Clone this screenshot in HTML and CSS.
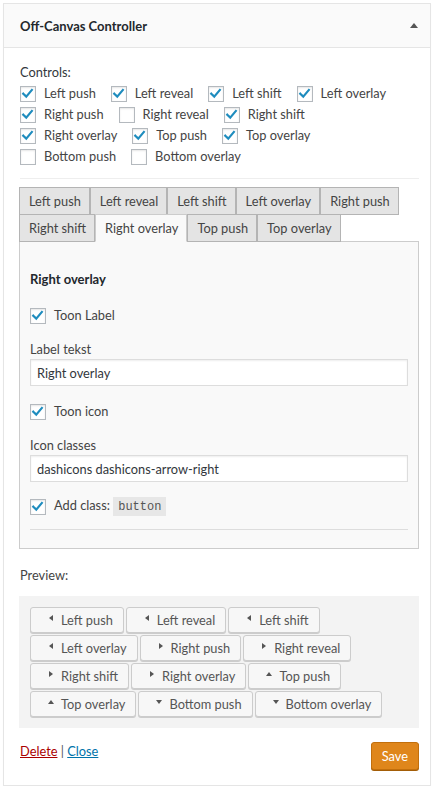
FILE: index.html
```html
<!DOCTYPE html>
<html lang="nl">
<head>
<meta charset="utf-8">
<title>Off-Canvas Controller</title>
<link rel="stylesheet" href="styles.css">
</head>
<body>
<div class="widget">
  <div class="widget-top">
    <h3 class="widget-title">Off-Canvas Controller</h3>
    <span class="toggle-arrow"></span>
  </div>
  <div class="widget-inside">
    <p class="controls-label">Controls:</p>
    <div class="controls-list">
      <label class="cb-item"><span class="cb"><svg viewBox="0 0 16 16" class="chk"><path d="M2.6 7.6 L6 11 L12.4 3.4"/></svg></span>Left push</label>
      <label class="cb-item"><span class="cb"><svg viewBox="0 0 16 16" class="chk"><path d="M2.6 7.6 L6 11 L12.4 3.4"/></svg></span>Left reveal</label>
      <label class="cb-item"><span class="cb"><svg viewBox="0 0 16 16" class="chk"><path d="M2.6 7.6 L6 11 L12.4 3.4"/></svg></span>Left shift</label>
      <label class="cb-item"><span class="cb"><svg viewBox="0 0 16 16" class="chk"><path d="M2.6 7.6 L6 11 L12.4 3.4"/></svg></span>Left overlay</label>
      <label class="cb-item"><span class="cb"><svg viewBox="0 0 16 16" class="chk"><path d="M2.6 7.6 L6 11 L12.4 3.4"/></svg></span>Right push</label>
      <label class="cb-item"><span class="cb"></span>Right reveal</label>
      <label class="cb-item"><span class="cb"><svg viewBox="0 0 16 16" class="chk"><path d="M2.6 7.6 L6 11 L12.4 3.4"/></svg></span>Right shift</label>
      <label class="cb-item"><span class="cb"><svg viewBox="0 0 16 16" class="chk"><path d="M2.6 7.6 L6 11 L12.4 3.4"/></svg></span>Right overlay</label>
      <label class="cb-item"><span class="cb"><svg viewBox="0 0 16 16" class="chk"><path d="M2.6 7.6 L6 11 L12.4 3.4"/></svg></span>Top push</label>
      <label class="cb-item"><span class="cb"><svg viewBox="0 0 16 16" class="chk"><path d="M2.6 7.6 L6 11 L12.4 3.4"/></svg></span>Top overlay</label>
      <label class="cb-item"><span class="cb"></span>Bottom push</label>
      <label class="cb-item"><span class="cb"></span>Bottom overlay</label>
    </div>
    <hr class="sep">
    <div class="tabs">
      <span class="tab">Left push</span>
      <span class="tab">Left reveal</span>
      <span class="tab">Left shift</span>
      <span class="tab">Left overlay</span>
      <span class="tab">Right push</span>
      <span class="tab">Right shift</span>
      <span class="tab active">Right overlay</span>
      <span class="tab">Top push</span>
      <span class="tab">Top overlay</span>
    </div>
    <div class="panel">
      <h4 class="panel-title">Right overlay</h4>
      <label class="cb-item field-cb"><span class="cb"><svg viewBox="0 0 16 16" class="chk"><path d="M2.6 7.6 L6 11 L12.4 3.4"/></svg></span>Toon Label</label>
      <label class="field-label">Label tekst</label>
      <input class="text-input" type="text" value="Right overlay">
      <label class="cb-item field-cb"><span class="cb"><svg viewBox="0 0 16 16" class="chk"><path d="M2.6 7.6 L6 11 L12.4 3.4"/></svg></span>Toon icon</label>
      <label class="field-label">Icon classes</label>
      <input class="text-input" type="text" value="dashicons dashicons-arrow-right">
      <label class="cb-item field-cb add-class"><span class="cb"><svg viewBox="0 0 16 16" class="chk"><path d="M2.6 7.6 L6 11 L12.4 3.4"/></svg></span><span>Add class: <code>button</code></span></label>
      <hr class="panel-sep">
    </div>
    <p class="preview-label">Preview:</p>
    <div class="preview">
      <div class="btn-wrap">
        <span class="pbtn"><span class="ico"><i class="tri tri-left"></i></span>Left push</span>
        <span class="pbtn"><span class="ico"><i class="tri tri-left"></i></span>Left reveal</span>
        <span class="pbtn"><span class="ico"><i class="tri tri-left"></i></span>Left shift</span>
        <span class="pbtn"><span class="ico"><i class="tri tri-left"></i></span>Left overlay</span>
        <span class="pbtn"><span class="ico"><i class="tri tri-right"></i></span>Right push</span>
        <span class="pbtn"><span class="ico"><i class="tri tri-right"></i></span>Right reveal</span>
        <span class="pbtn"><span class="ico"><i class="tri tri-right"></i></span>Right shift</span>
        <span class="pbtn"><span class="ico"><i class="tri tri-right"></i></span>Right overlay</span>
        <span class="pbtn"><span class="ico"><i class="tri tri-up"></i></span>Top push</span>
        <span class="pbtn"><span class="ico"><i class="tri tri-up"></i></span>Top overlay</span>
        <span class="pbtn"><span class="ico"><i class="tri tri-down"></i></span>Bottom push</span>
        <span class="pbtn"><span class="ico"><i class="tri tri-down"></i></span>Bottom overlay</span>
      </div>
    </div>
    <div class="footer">
      <div class="links"><a href="#" class="del">Delete</a> <span class="bar">|</span> <a href="#" class="close">Close</a></div>
      <button class="save" type="button">Save</button>
    </div>
  </div>
</div>
</body>
</html>
```

FILE: styles.css
```css
body {
  margin: 0;
  font-family: Lato, "Open Sans", sans-serif;
  font-size: 12.8px;
  color: #444;
  background: #fff;
}

.widget {
  margin: 3px 0 0 3px;
  width: 428px;
  box-sizing: border-box;
  border: 1px solid #e5e5e5;
  background: #fff;
  box-shadow: 0 1px 1px rgba(0,0,0,.04);
}

.widget-top {
  height: 43px;
  border-bottom: 1px solid #e5e5e5;
  background: #fafafa;
  display: flex;
  align-items: center;
  justify-content: space-between;
  padding: 0 12px 0 16px;
}

.widget-title {
  margin: 0;
  font-size: 13px;
  font-weight: 700;
  color: #23282d;
}

.toggle-arrow {
  width: 0;
  height: 0;
  border-left: 4px solid transparent;
  border-right: 4px solid transparent;
  border-bottom: 5px solid #555;
  margin-top: -1px;
}

.widget-inside {
  padding: 14px 11px 15px 16px;
}

.controls-label {
  margin: 0;
  line-height: 21px;
  color: #32373c;
}

.controls-list {
  display: flex;
  flex-wrap: wrap;
}

.cb-item {
  display: flex;
  align-items: center;
  gap: 8px;
  height: 21px;
  line-height: 21px;
}

.controls-list .cb-item {
  margin-right: 15px;
}

.cb {
  width: 16px;
  height: 16px;
  flex: none;
  box-sizing: border-box;
  border: 1px solid #b4b9be;
  background: #fff;
  box-shadow: inset 0 1px 2px rgba(0,0,0,.1);
  display: flex;
  align-items: center;
  justify-content: center;
}

.chk {
  width: 14px;
  height: 14px;
  fill: none;
  stroke: #1e8cbe;
  stroke-width: 2.5;
  stroke-linecap: square;
}

.sep {
  margin: 11px 0 8px;
  border: 0;
  border-top: 1px solid #eee;
  height: 0;
}

.tabs {
  display: flex;
  flex-wrap: wrap;
  margin-left: -1px;
}

.tab {
  height: 28px;
  box-sizing: border-box;
  padding: 0 8px 0 9px;
  line-height: 26px;
  border: 1px solid #b4b4b4;
  background: #e4e4e4;
  margin-bottom: -1px;
  color: #444;
}

.tab.active {
  position: relative;
  z-index: 1;
  background: #f9f9f9;
  border-color: #ccc;
  border-bottom-color: #f9f9f9;
}

.panel {
  margin-left: -1px;
  border: 1px solid #ccc;
  background: #f9f9f9;
  padding: 0 10px 18px;
}

.panel-title {
  margin: 27px 0 0;
  line-height: 20px;
  font-size: 13px;
  font-weight: 700;
  color: #23282d;
}

.field-cb {
  margin-top: 16px;
}

.field-label {
  display: block;
  margin-top: 14px;
  line-height: 19px;
}

.text-input {
  display: block;
  width: 100%;
  height: 27px;
  box-sizing: border-box;
  margin: 0;
  padding: 0 6px;
  border: 1px solid #ddd;
  box-shadow: inset 0 1px 2px rgba(0,0,0,.07);
  background: #fff;
  font-family: inherit;
  font-size: 12.8px;
  color: #32373c;
}

.text-input + .field-cb {
  margin-top: 15px;
}

.add-class {
  margin-top: 14px !important;
}

code {
  font-family: "Liberation Mono", "DejaVu Sans Mono", monospace;
  font-size: 12px;
  background: rgba(0,0,0,.07);
  padding: 3px 5px 2px;
  color: #555;
}

.panel-sep {
  margin: 12px 0 0;
  border: 0;
  border-top: 1px solid #ddd;
  height: 0;
}

.preview-label {
  margin: 16px 0 0;
  line-height: 20px;
}

.preview {
  margin: 11px 0 0 -1px;
  background: #f3f3f3;
  padding: 11px;
}

.btn-wrap {
  display: flex;
  flex-wrap: wrap;
  gap: 2px;
}

.pbtn {
  height: 26px;
  box-sizing: border-box;
  border: 1px solid #ccc;
  border-radius: 3px;
  background: #f7f7f7;
  box-shadow: 0 1px 0 #ccc;
  padding: 0 10px;
  display: inline-flex;
  align-items: center;
  color: #555;
  line-height: 24px;
}

.ico {
  width: 20px;
  height: 20px;
  display: flex;
  align-items: center;
  justify-content: center;
  margin-top: -4px;
}

.tri {
  width: 0;
  height: 0;
  display: block;
}

.tri-left {
  border-top: 3px solid transparent;
  border-bottom: 3px solid transparent;
  border-right: 4px solid #555;
}

.tri-right {
  border-top: 3px solid transparent;
  border-bottom: 3px solid transparent;
  border-left: 4px solid #555;
}

.tri-up {
  border-left: 3px solid transparent;
  border-right: 3px solid transparent;
  border-bottom: 4px solid #555;
}

.tri-down {
  border-left: 3px solid transparent;
  border-right: 3px solid transparent;
  border-top: 4px solid #555;
}

.footer {
  margin-top: 14px;
  display: flex;
  justify-content: space-between;
  align-items: flex-start;
}

.links {
  line-height: 18px;
  color: #555;
}

.del {
  color: #a00;
}

.close {
  color: #0073aa;
}

.save {
  height: 28px;
  box-sizing: border-box;
  padding: 0 10px 1px;
  border: 1px solid #c26f0c;
  border-radius: 3px;
  background: #df861b;
  box-shadow: 0 1px 0 #a35d07;
  color: #fff;
  font-family: inherit;
  font-size: 12.8px;
  line-height: 26px;
}
```
